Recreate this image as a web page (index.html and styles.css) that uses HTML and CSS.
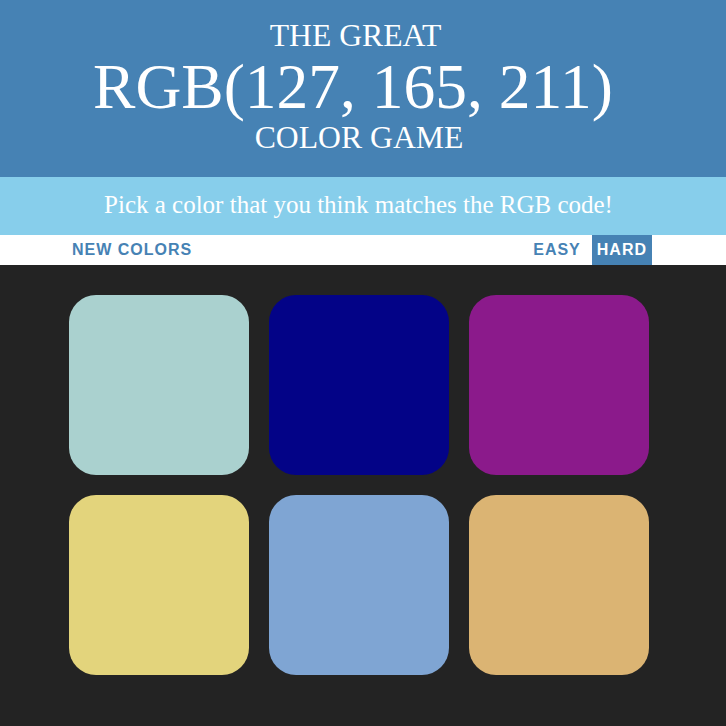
FILE: index.html
```html
<!DOCTYPE html>
<html>
<head>
<meta charset="utf-8">
<link rel="stylesheet" href="styles.css">
</head>
<body>
<h1 class="title">
  <span class="title-small title-top">The Great</span>
  <span class="color-display">RGB(127, 165, 211)</span>
  <span class="title-small">Color Game</span>
</h1>
<div class="message-bar">Pick a color that you think matches the RGB code!</div>
<div class="stripe">
  <div class="stripe-inner">
    <button class="btn">New Colors</button>
    <div class="modes">
      <button class="btn">Easy</button>
      <button class="btn selected">Hard</button>
    </div>
  </div>
</div>
<div class="board">
  <div class="square" style="background: rgb(170, 209, 207);"></div>
  <div class="square" style="background: rgb(3, 3, 135);"></div>
  <div class="square" style="background: rgb(139, 26, 139);"></div>
  <div class="square" style="background: rgb(227, 212, 124);"></div>
  <div class="square" style="background: rgb(127, 165, 211);"></div>
  <div class="square" style="background: rgb(219, 180, 115);"></div>
</div>
</body>
</html>
```

FILE: styles.css
```css
html, body {
  margin: 0;
  padding: 0;
}
body {
  background: #232323;
  font-family: "Liberation Serif", "Times New Roman", serif;
}
.title {
  margin: 0;
  background: #4682b4;
  color: #ffffff;
  font-weight: normal;
  text-transform: uppercase;
  text-align: center;
  font-size: 31.7px;
  line-height: 1.1;
  padding: 19px 8px 19px 0;
  height: 177px;
  box-sizing: border-box;
  display: flex;
  flex-direction: column;
  align-items: center;
}
.title-top {
  margin-right: 7px;
}
.color-display {
  font-size: 63.5px;
  line-height: 1.05;
  margin-right: 12px;
}
.message-bar {
  background: #87ceeb;
  color: #ffffff;
  text-align: center;
  font-size: 25px;
  height: 58px;
  line-height: 56px;
  padding-right: 9px;
}
.stripe {
  background: #ffffff;
  height: 30px;
}
.stripe-inner {
  width: 583px;
  margin-left: 69px;
  display: flex;
  justify-content: space-between;
  height: 30px;
}
.modes {
  display: flex;
  gap: 8px;
}
.btn {
  border: none;
  background: none;
  margin: 0;
  padding: 0 3px;
  height: 30px;
  font-family: "Liberation Sans", Arial, sans-serif;
  font-weight: bold;
  font-size: 16px;
  letter-spacing: 1px;
  text-transform: uppercase;
  color: #4682b4;
}
.btn.selected {
  background: #4682b4;
  color: #ffffff;
  padding: 0 5px 0 5px;
}
.board {
  width: 580px;
  margin-left: 69px;
  padding-top: 30px;
  display: grid;
  grid-template-columns: repeat(3, 180px);
  grid-auto-rows: 180px;
  gap: 20px;
}
.square {
  border-radius: 15%;
}
```
